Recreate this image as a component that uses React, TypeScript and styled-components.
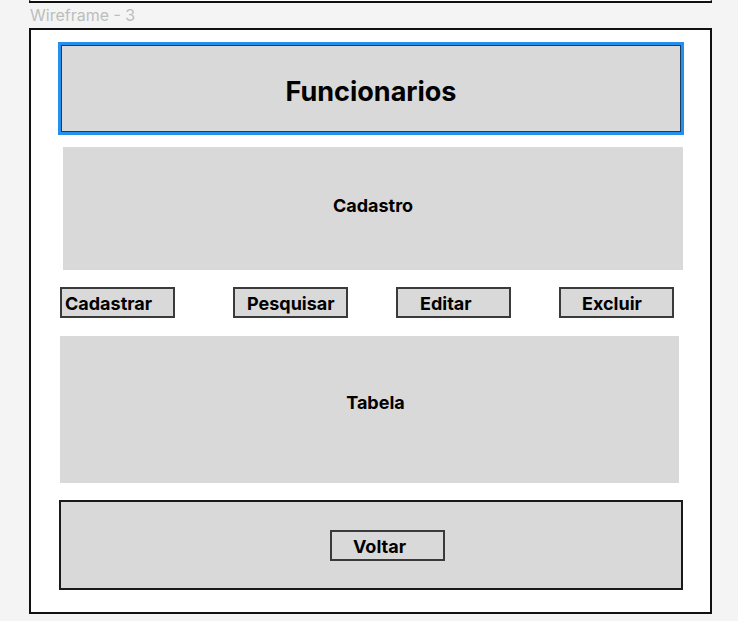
import React from "react";
import styled, { createGlobalStyle } from "styled-components";

const GlobalStyle = createGlobalStyle`
  html, body {
    margin: 0;
    padding: 0;
    background: #f4f4f4;
  }
  body {
    font-family: Inter, "Noto Sans", "Liberation Sans", sans-serif;
  }
`;

const Page = styled.div`
  display: flex;
  flex-direction: column;
  padding-left: 29px;
  width: 683px;
`;

const PrevFrame = styled.div`
  box-sizing: border-box;
  width: 683px;
  height: 3px;
  background: #fff;
  border: 2px solid #111;
  border-top: 1px solid #fff;
`;

const FrameLabel = styled.div`
  height: 25px;
  line-height: 25px;
  padding-left: 1px;
  font-size: 16px;
  color: #bdbdbd;
`;

const Frame = styled.div`
  box-sizing: border-box;
  width: 683px;
  background: #fff;
  border: 2px solid #111;
  display: flex;
  flex-direction: column;
  align-items: flex-start;
  padding: 12px 0 22px;
`;

const TitleBox = styled.div`
  box-sizing: border-box;
  margin-left: 27px;
  width: 626px;
  height: 93px;
  background: #d9d9d9;
  border: 3px solid #2590ec;
  box-shadow: inset 0 0 0 1px #1d3b5e;
  display: flex;
  align-items: center;
  justify-content: center;
  padding-top: 6px;
  font-size: 27px;
  font-weight: 700;
  color: #000;
`;

const Panel = styled.div<{ $top: number; $left: number; $width: number; $height: number; $padBottom: number; $padLeft: number }>`
  box-sizing: border-box;
  margin-top: ${(p) => p.$top}px;
  margin-left: ${(p) => p.$left}px;
  width: ${(p) => p.$width}px;
  height: ${(p) => p.$height}px;
  background: #d9d9d9;
  display: flex;
  align-items: center;
  justify-content: center;
  padding-bottom: ${(p) => p.$padBottom}px;
  padding-left: ${(p) => p.$padLeft}px;
  font-size: 18px;
  font-weight: 700;
  color: #000;
`;

const ButtonRow = styled.div`
  display: flex;
  margin-top: 17px;
  margin-left: 29px;
`;

const WireButton = styled.div<{ $gap: number; $pad: number }>`
  box-sizing: border-box;
  margin-left: ${(p) => p.$gap}px;
  width: 115px;
  height: 31px;
  background: #d9d9d9;
  border: 2px solid #3a3a3a;
  display: flex;
  align-items: center;
  padding-top: 2px;
  padding-left: ${(p) => p.$pad - 1}px;
  font-size: 18px;
  font-weight: 700;
  color: #000;
`;

const Footer = styled.div`
  box-sizing: border-box;
  margin-top: 17px;
  margin-left: 28px;
  width: 624px;
  height: 90px;
  background: #d9d9d9;
  border: 2px solid #1a1a1a;
  display: flex;
  align-items: center;
  padding-left: 269px;
`;

const buttons = [
  { label: "Cadastrar", gap: 0, pad: 4 },
  { label: "Pesquisar", gap: 58, pad: 13 },
  { label: "Editar", gap: 48, pad: 23 },
  { label: "Excluir", gap: 48, pad: 22 },
];

export default function App() {
  return (
    <>
      <GlobalStyle />
      <Page>
        <PrevFrame />
        <FrameLabel>Wireframe - 3</FrameLabel>
        <Frame>
          <TitleBox>Funcionarios</TitleBox>
          <Panel $top={12} $left={32} $width={620} $height={123} $padBottom={6} $padLeft={0}>
            Cadastro
          </Panel>
          <ButtonRow>
            {buttons.map((b) => (
              <WireButton key={b.label} $gap={b.gap} $pad={b.pad}>
                {b.label}
              </WireButton>
            ))}
          </ButtonRow>
          <Panel $top={18} $left={29} $width={619} $height={147} $padBottom={14} $padLeft={12}>
            Tabela
          </Panel>
          <Footer>
            <WireButton $gap={0} $pad={22}>
              Voltar
            </WireButton>
          </Footer>
        </Frame>
      </Page>
    </>
  );
}
